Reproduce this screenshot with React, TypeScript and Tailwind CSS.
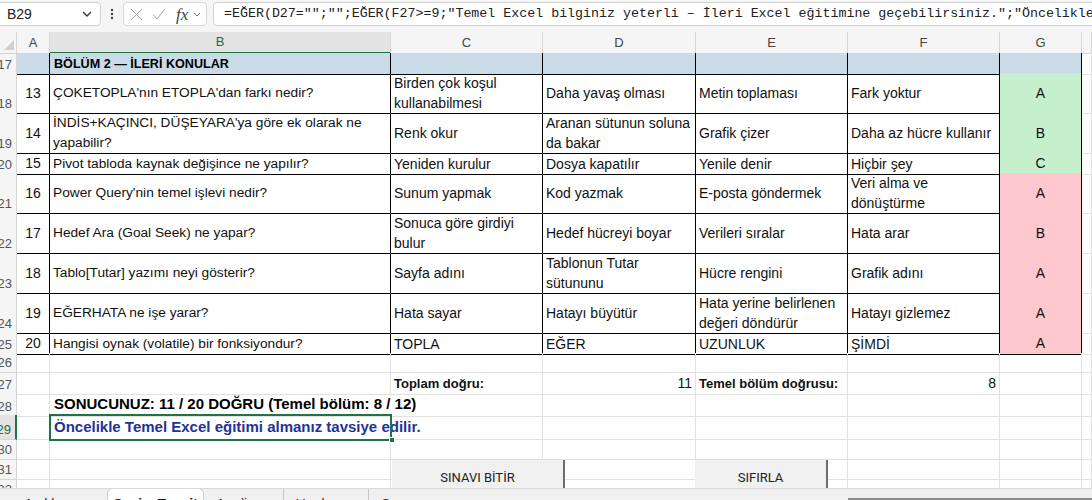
import React from 'react'

type Line = string | string[]

type QRow = {
  n: number
  h: string
  q: number
  b: Line
  c: Line
  d: Line
  e: Line
  f: Line
  g: string
  ok: boolean
}

const COLS = 'grid grid-cols-[17px_33px_341px_152px_153px_152px_152px_82px_10px]'

const questions: QRow[] = [
  { n: 18, h: 'h-[40px]', q: 13, b: "ÇOKETOPLA'nın ETOPLA'dan farkı nedir?", c: ['Birden çok koşul', 'kullanabilmesi'], d: 'Daha yavaş olması', e: 'Metin toplaması', f: 'Fark yoktur', g: 'A', ok: true },
  { n: 19, h: 'h-[40px]', q: 14, b: ["İNDİS+KAÇINCI, DÜŞEYARA'ya göre ek olarak ne", 'yapabilir?'], c: 'Renk okur', d: ['Aranan sütunun soluna', 'da bakar'], e: 'Grafik çizer', f: 'Daha az hücre kullanır', g: 'B', ok: true },
  { n: 20, h: 'h-[20px]', q: 15, b: 'Pivot tabloda kaynak değişince ne yapılır?', c: 'Yeniden kurulur', d: 'Dosya kapatılır', e: 'Yenile denir', f: 'Hiçbir şey', g: 'C', ok: true },
  { n: 21, h: 'h-[40px]', q: 16, b: "Power Query'nin temel işlevi nedir?", c: 'Sunum yapmak', d: 'Kod yazmak', e: 'E-posta göndermek', f: ['Veri alma ve', 'dönüştürme'], g: 'A', ok: false },
  { n: 22, h: 'h-[40px]', q: 17, b: 'Hedef Ara (Goal Seek) ne yapar?', c: ['Sonuca göre girdiyi', 'bulur'], d: 'Hedef hücreyi boyar', e: 'Verileri sıralar', f: 'Hata arar', g: 'B', ok: false },
  { n: 23, h: 'h-[40px]', q: 18, b: 'Tablo[Tutar] yazımı neyi gösterir?', c: 'Sayfa adını', d: ['Tablonun Tutar', 'sütununu'], e: 'Hücre rengini', f: 'Grafik adını', g: 'A', ok: false },
  { n: 24, h: 'h-[40px]', q: 19, b: 'EĞERHATA ne işe yarar?', c: 'Hata sayar', d: 'Hatayı büyütür', e: ['Hata yerine belirlenen', 'değeri döndürür'], f: 'Hatayı gizlemez', g: 'A', ok: false },
  { n: 25, h: 'h-[20px]', q: 20, b: 'Hangisi oynak (volatile) bir fonksiyondur?', c: 'TOPLA', d: 'EĞER', e: 'UZUNLUK', f: 'ŞİMDİ', g: 'A', ok: false },
]

function RowHead({ n, active }: { n: number; active?: boolean }) {
  return (
    <div
      className={`flex items-end justify-end overflow-hidden border-b border-[#d6d6d6] pr-[4px] pb-[1px] text-[13px] leading-[17px] ${
        active ? 'border-r-2 border-r-[#217346] bg-[#e3e3e3] text-[#1d6b3f]' : 'border-r border-r-[#d6d6d6] bg-[#f5f5f5] text-[#555]'
      }`}
    >
      <span className="whitespace-nowrap">{n}</span>
    </div>
  )
}

function Grid({ children, className = '' }: { children?: React.ReactNode; className?: string }) {
  return <div className={`min-w-0 border-b border-[#e1e1e1] ${className.includes('border-r-0') ? '' : 'border-r'} ${className}`}>{children}</div>
}

function Text({ v }: { v: Line }) {
  const lines = Array.isArray(v) ? v : [v]
  return (
    <div className="flex flex-col justify-center leading-[20px]">
      {lines.map((l) => (
        <span key={l} className="whitespace-nowrap">{l}</span>
      ))}
    </div>
  )
}

function Box({ v, className = '' }: { v: Line; className?: string }) {
  return (
    <div className={`flex min-w-0 items-center border-r border-b border-black pl-[3px] ${className}`}>
      <Text v={v} />
    </div>
  )
}

export default function App() {
  return (
    <div className="flex h-[500px] w-[1092px] flex-col overflow-hidden bg-white font-['Liberation_Sans',Arial,sans-serif] text-[14px] text-[#111]">
      {/* formula bar */}
      <div className="flex h-[32px] shrink-0 items-start gap-0 bg-[#f5f5f5] pt-[2px]">
        <div className="-ml-[4px] flex h-[24px] w-[105px] items-center justify-between rounded-[4px] border border-[#d1d1d1] bg-white pr-[8px] pl-[10px] text-[14px] text-[#222]">
          <span>B29</span>
          <svg width="10" height="6" viewBox="0 0 10 6" fill="none" stroke="#333" strokeWidth="1.3"><path d="M1 1l4 4 4-4" /></svg>
        </div>
        <div className="flex h-[24px] w-[22px] items-center justify-center">
          <svg width="4" height="12" viewBox="0 0 4 12" fill="#444"><circle cx="2" cy="2" r="1.2" /><circle cx="2" cy="6" r="1.2" /><circle cx="2" cy="10" r="1.2" /></svg>
        </div>
        <div className="flex h-[24px] w-[84px] items-center rounded-[4px] border border-[#d8d8d8] bg-white pl-[6px]">
          <svg width="13" height="13" viewBox="0 0 13 13" fill="none" stroke="#a6a6a6" strokeWidth="1"><path d="M1 1l11 11M12 1L1 12" /></svg>
          <svg className="ml-[9px]" width="14" height="12" viewBox="0 0 14 12" fill="none" stroke="#a6a6a6" strokeWidth="1"><path d="M1 6.5l4 4.5L13 1" /></svg>
          <span className="ml-[10px] font-['Liberation_Serif',serif] text-[17px] leading-none text-[#444] italic">fx</span>
          <svg className="ml-[5px]" width="8" height="5" viewBox="0 0 8 5" fill="none" stroke="#777" strokeWidth="1"><path d="M1 1l3 3 3-3" /></svg>
        </div>
        <div className="-mr-[12px] ml-[6px] flex h-[24px] flex-1 items-center overflow-hidden rounded-[4px] border border-[#d1d1d1] bg-white pl-[10px] font-['Liberation_Mono',monospace] text-[13.3px] whitespace-nowrap text-[#222]">
          =EĞER(D27="";"";EĞER(F27&gt;=9;"Temel Excel bilginiz yeterli – İleri Excel eğitimine geçebilirsiniz.";"Öncelikle Temel Excel eğitimi almanız tavsiye edilir."))
        </div>
      </div>

      {/* sheet */}
      <div className="relative min-h-0 flex-1 overflow-hidden">
        <div className={`${COLS} h-[21px] text-[13px] text-[#444]`}>
          <div className="relative border-r border-b border-[#d6d6d6] bg-[#f5f5f5]">
            <svg className="absolute right-[2px] bottom-[3px]" width="10" height="10" viewBox="0 0 10 10"><path d="M10 0V10H0Z" fill="#d0d0d0" /></svg>
          </div>
          {['A', 'B', 'C', 'D', 'E', 'F', 'G', ''].map((l) =>
            l === 'B' ? (
              <div key={l} className="flex items-center justify-center border-r border-r-[#d6d6d6] border-b-2 border-b-[#217346] bg-[#e3e3e3] text-[#1d6b3f]">
                B
              </div>
            ) : (
              <div key={l || 'H'} className="flex items-center justify-center border-r border-b border-[#d6d6d6] bg-[#f5f5f5]">
                {l}
              </div>
            ),
          )}
        </div>

        {/* section header */}
        <div className={`${COLS} h-[20px]`}>
          <RowHead n={17} />
          <div className="border-r border-b border-black bg-[#c9dbe7]" />
          <div className="flex items-center border-r border-b border-black bg-[#c9dbe7] pt-[2px] pl-[4px] text-[12.6px] font-bold whitespace-nowrap text-black">
            BÖLÜM 2 — İLERİ KONULAR
          </div>
          <div className="border-r border-b border-black bg-[#c9dbe7]" />
          <div className="border-r border-b border-black bg-[#c9dbe7]" />
          <div className="border-r border-b border-black bg-[#c9dbe7]" />
          <div className="border-r border-b border-black bg-[#c9dbe7]" />
          <div className="border-r border-b border-black bg-[#c9dbe7]" />
          <Grid />
        </div>

        {questions.map((r) => (
          <div key={r.n} className={`${COLS} ${r.h}`}>
            <RowHead n={r.n} />
            <div className="flex items-center justify-center border-r border-b border-black">{r.q}</div>
            <Box v={r.b} className="text-[13.7px]" />
            <Box v={r.c} />
            <Box v={r.d} />
            <Box v={r.e} />
            <Box v={r.f} />
            <div className={`flex items-center justify-center border-r border-b border-black ${r.ok ? 'bg-[#c6efce]' : 'bg-[#ffc7ce]'}`}>{r.g}</div>
            <Grid />
          </div>
        ))}

        <div className={`${COLS} h-[20px]`}>
          <RowHead n={26} />
          <Grid /><Grid /><Grid /><Grid /><Grid /><Grid /><Grid /><Grid />
        </div>

        <div className={`${COLS} h-[20px]`}>
          <RowHead n={27} />
          <Grid />
          <Grid />
          <Grid className="flex items-center pl-[3px] text-[13px] font-bold whitespace-nowrap">Toplam doğru:</Grid>
          <Grid className="flex items-center justify-end pr-[3px]">11</Grid>
          <Grid className="flex items-center pl-[3px] text-[13px] font-bold whitespace-nowrap">Temel bölüm doğrusu:</Grid>
          <Grid className="flex items-center justify-end pr-[3px]">8</Grid>
          <Grid />
          <Grid />
        </div>

        <div className={`${COLS} h-[22px]`}>
          <RowHead n={28} />
          <Grid />
          <Grid className="border-r-0 flex items-center pl-[4px] text-[15px] font-bold whitespace-nowrap text-black">
            SONUCUNUZ: 11 / 20 DOĞRU (Temel bölüm: 8 / 12)
          </Grid>
          <Grid /><Grid /><Grid /><Grid /><Grid /><Grid />
        </div>

        <div className={`${COLS} h-[25px]`}>
          <RowHead n={29} active />
          <Grid />
          <Grid className="border-r-0 flex items-center pl-[4px] text-[15px] font-bold whitespace-nowrap text-[#1f3394]">
            Öncelikle Temel Excel eğitimi almanız tavsiye edilir.
          </Grid>
          <Grid /><Grid /><Grid /><Grid /><Grid /><Grid />
        </div>

        {[30, 31, 32].map((n) => (
          <div key={n} className={`${COLS} h-[20px]`}>
            <RowHead n={n} />
            <Grid /><Grid /><Grid /><Grid /><Grid /><Grid /><Grid /><Grid />
          </div>
        ))}

        {/* selected cell B29 */}
        <div className="pointer-events-none absolute top-[382px] left-[49px] h-[27px] w-[343px] border-2 border-[#217346]" />
        <div className="pointer-events-none absolute top-[405px] left-[389px] h-[6px] w-[6px] border border-white bg-[#217346]" />

        {/* form buttons */}
        <button className="absolute top-[428px] left-[392px] flex h-[40px] w-[173px] items-start justify-center border-r-2 border-r-[#6e6e6e] bg-[#f0f0f0] pt-[10px] font-['Roboto',sans-serif] text-[13px] leading-[16px] text-[#222]">
          SINAVI BİTİR
        </button>
        <button className="absolute top-[428px] left-[695px] flex h-[40px] w-[133px] items-start justify-center border-r-2 border-r-[#6e6e6e] bg-[#f0f0f0] pt-[10px] font-['Roboto',sans-serif] text-[13px] leading-[16px] text-[#222]">
          SIFIRLA
        </button>
      </div>

      {/* sheet tabs */}
      <div className="relative flex h-[12px] shrink-0 items-start overflow-hidden border-t border-[#dadada] bg-[#f0f0f0] text-[14px] leading-[18px] text-[#333]">
        <div className="flex h-[30px] w-[107px] items-start pt-[6px] pl-[24px]">Açıklama</div>
        <div className="-mt-px flex h-[30px] w-[97px] items-start justify-center rounded-t-[6px] border border-b-0 border-[#cfcfcf] bg-white pt-[6px] font-bold text-[#222]">
          SeviyeTespit
        </div>
        <div className="flex h-[30px] w-[80px] items-start border-r border-[#c8c8c8] pt-[6px] pl-[12px]">Analiz</div>
        <div className="flex h-[30px] w-[85px] items-start border-r border-[#c8c8c8] pt-[6px] pl-[12px]">Yardımcı</div>
        <div className="flex h-[30px] w-[80px] items-start pt-[6px] pl-[12px]">Sonuç</div>
        <div className="absolute right-0 bottom-0 left-[848px] h-[2px] bg-[#8a8a8a]" />
      </div>
    </div>
  )
}
